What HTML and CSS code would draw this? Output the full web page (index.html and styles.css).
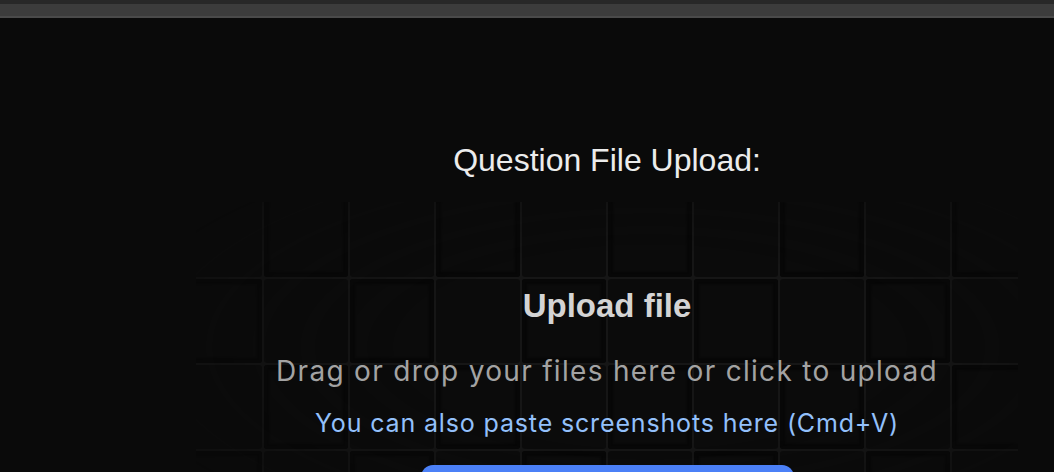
FILE: index.html
```html
<!DOCTYPE html>
<html lang="en">
<head>
<meta charset="utf-8">
<title>Question File Upload</title>
<link rel="stylesheet" href="styles.css">
</head>
<body>
<div class="topbar">
  <div class="topbar-strip"></div>
  <div class="topbar-main"></div>
  <div class="topbar-line"></div>
</div>
<div class="layout">
  <aside class="sidebar"></aside>
  <main class="content">
    <h2 class="title">Question File Upload:</h2>
    <div class="dropzone">
      <div class="grid-pattern">
        <div class="cell"></div><div class="cell sh"></div><div class="cell"></div><div class="cell sh"></div><div class="cell"></div><div class="cell sh"></div><div class="cell"></div><div class="cell sh"></div><div class="cell"></div><div class="cell sh"></div><div class="cell"></div>
        <div class="cell sh"></div><div class="cell"></div><div class="cell sh"></div><div class="cell"></div><div class="cell sh"></div><div class="cell"></div><div class="cell sh"></div><div class="cell"></div><div class="cell sh"></div><div class="cell"></div><div class="cell sh"></div>
        <div class="cell"></div><div class="cell sh"></div><div class="cell"></div><div class="cell sh"></div><div class="cell"></div><div class="cell sh"></div><div class="cell"></div><div class="cell sh"></div><div class="cell"></div><div class="cell sh"></div><div class="cell"></div>
        <div class="cell sh"></div><div class="cell"></div><div class="cell sh"></div><div class="cell"></div><div class="cell sh"></div><div class="cell"></div><div class="cell sh"></div><div class="cell"></div><div class="cell sh"></div><div class="cell"></div><div class="cell sh"></div>
      </div>
      <div class="dz-body">
        <p class="dz-title">Upload file</p>
        <p class="dz-sub">Drag or drop your files here or click to upload</p>
        <p class="dz-hint">You can also paste screenshots here (Cmd+V)</p>
        <div class="dz-target"></div>
      </div>
    </div>
  </main>
</div>
</body>
</html>
```

FILE: styles.css
```css
* { box-sizing: border-box; }
html, body { margin: 0; padding: 0; }
body {
  background: #0a0a0a;
  width: 1054px;
  height: 472px;
  overflow: hidden;
  font-family: "Liberation Sans", Arial, sans-serif;
}
.topbar { display: flex; flex-direction: column; }
.topbar-strip { height: 4px; background: #282828; }
.topbar-main { height: 12px; background: #3c3c3c; }
.topbar-line { height: 2px; background: #4a4a4a; }

.layout { display: flex; }
.sidebar { width: 160px; flex-shrink: 0; }
.content {
  flex: 1;
  display: flex;
  flex-direction: column;
  align-items: center;
}
.title {
  margin: 124px 0 0;
  font-size: 32px;
  font-weight: 400;
  line-height: 37px;
  color: #ececec;
}
.dropzone {
  position: relative;
  width: 822px;
  height: 300px;
  margin-top: 23px;
  overflow: hidden;
}
.grid-pattern {
  position: absolute;
  left: -18px;
  top: -9px;
  display: grid;
  grid-template-columns: repeat(11, 84px);
  grid-auto-rows: 84px;
  gap: 2px;
  background: #161616;
  -webkit-mask-image: radial-gradient(ellipse at 50% 45%, #000 35%, rgba(0,0,0,0.35) 85%);
  mask-image: radial-gradient(ellipse at 50% 45%, #000 35%, rgba(0,0,0,0.35) 85%);
}
.cell {
  background: #0b0b0b;
  border-radius: 3px;
}
.cell.sh {
  box-shadow: inset 0 0 2px 5px #070707;
}
.dz-body {
  position: relative;
  display: flex;
  flex-direction: column;
  align-items: center;
  padding-top: 86px;
}
.dz-title {
  margin: 0;
  font-size: 33px;
  font-weight: 700;
  line-height: 36px;
  color: #d4d4d4;
}
.dz-sub {
  margin: 30px 0 0;
  font-family: Inter, "Liberation Sans", sans-serif;
  font-size: 28px;
  letter-spacing: 1.3px;
  line-height: 34px;
  color: #a3a3a3;
}
.dz-hint {
  margin: 20px 0 0;
  font-family: Inter, "Liberation Sans", sans-serif;
  font-size: 25px;
  letter-spacing: 0.85px;
  line-height: 30px;
  color: #93c0fb;
}
.dz-target {
  margin-top: 27px;
  width: 373px;
  height: 80px;
  border-radius: 12px;
  background: #4b80f7;
}
```
